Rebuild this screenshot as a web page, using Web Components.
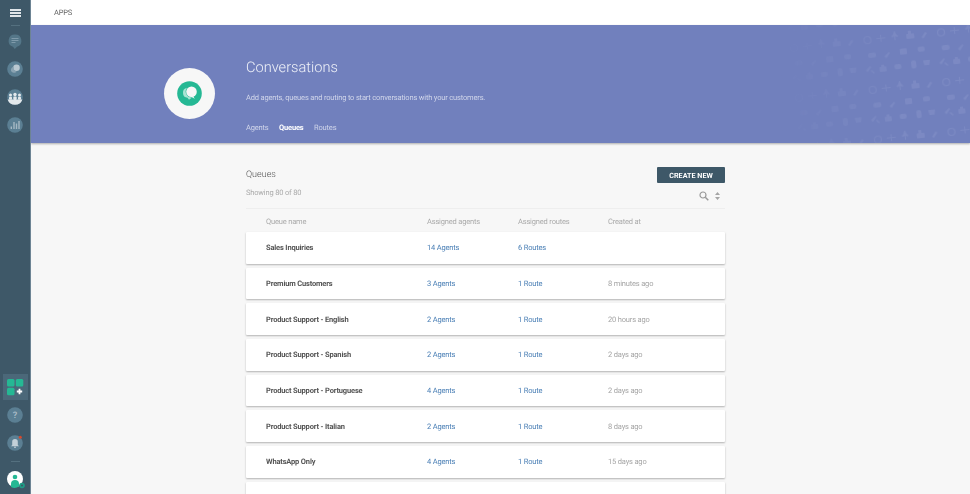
<!DOCTYPE html>
<html>
<head>
<meta charset="utf-8">
<title>Conversations</title>
<style>
html,body{margin:0;height:100%;overflow:hidden}
body{font-family:Roboto,"Liberation Sans",sans-serif;background:#f7f7f7;text-rendering:geometricPrecision}
</style>
</head>
<body>
<app-shell>
  <side-nav slot="nav"></side-nav>
  <top-bar slot="top">APPS</top-bar>
  <hero-band slot="hero" heading="Conversations" text="Add agents, queues and routing to start conversations with your customers."></hero-band>
  <queue-list>
    <queue-row name="Sales Inquiries" agents="14 Agents" routes="6 Routes" created=""></queue-row>
    <queue-row name="Premium Customers" agents="3 Agents" routes="1 Route" created="8 minutes ago"></queue-row>
    <queue-row name="Product Support - English" agents="2 Agents" routes="1 Route" created="20 hours ago"></queue-row>
    <queue-row name="Product Support - Spanish" agents="2 Agents" routes="1 Route" created="2 days ago"></queue-row>
    <queue-row name="Product Support - Portuguese" agents="4 Agents" routes="1 Route" created="2 days ago"></queue-row>
    <queue-row name="Product Support - Italian" agents="2 Agents" routes="1 Route" created="8 days ago"></queue-row>
    <queue-row name="WhatsApp Only" agents="4 Agents" routes="1 Route" created="15 days ago"></queue-row>
    <queue-row name="" agents="" routes="" created=""></queue-row>
  </queue-list>
</app-shell>
<script>
// outer frame: nav on the left, everything else stacked on the right
class AppShell extends HTMLElement {
  connectedCallback(){
    const shadow = this.attachShadow({mode:'open'});
    // the slight blur is there because the reference is a scaled down capture
    shadow.innerHTML = `
    <style>
    :host{display:flex;height:494px;width:970px;overflow:hidden;filter:blur(.3px);--small:7.500px;--tight:-.17px}
    .main{flex:1;min-width:0;display:flex;flex-direction:column;overflow:hidden}
    </style>
    <slot name="nav"></slot>
    <div class="main">
      <slot name="top"></slot>
      <slot name="hero"></slot>
      <slot></slot>
    </div>`;
  }
}
customElements.define("app-shell", AppShell);

class SideNav extends HTMLElement {
  connectedCallback(){
    const shadow = this.attachShadow({mode:'open'});
    shadow.innerHTML = `
    <style>
    :host{display:flex;flex-direction:column;align-items:center;width:30px;flex:none;background:#3e5868;border-right:1px solid #6d8494;height:494px}
    svg{display:block}
    .burger{margin-top:9px;width:11px;height:8px;display:flex;flex-direction:column;justify-content:space-between}
    .burger i{display:block;height:2px;background:#dfe5e9}
    .sep{width:9px;height:1px;background:#54707f;margin-top:8px}
    .ico{width:16px;height:16px}
    .spacer{flex:1}
    .add{width:25px;height:26px;background:#4b6879;display:grid;place-items:center;margin-bottom:7px}
    .avatar{width:16px;height:16px;margin-bottom:7px}
    </style>
    <div class="burger"><i></i><i></i><i></i></div>
    <div class="sep"></div>
    <svg class="ico" style="margin-top:7px" viewBox="0 0 16 16"><path d="M8 1.500a6.300 6.300 0 0 1 2 12.300L7.800 16 6 13.800A6.300 6.300 0 0 1 8 1.500z" fill="#547688"/><path d="M4.500 5.500h7M4.500 7.500h7M4.500 9.500h4" stroke="#7f9aaa" stroke-width="1"/></svg>
    <svg class="ico" style="margin-top:12px" viewBox="0 0 16 16"><circle cx="8" cy="8" r="7.800" fill="#5b7f93"/><circle cx="9.500" cy="6.800" r="3.300" fill="#b9c8d1"/><path d="M4 10a4 4 0 0 1 2.800-4.500A4 4 0 0 0 9.800 10.800 4 4 0 0 1 4 10z" fill="#8aa3b2"/></svg>
    <svg class="ico" style="margin-top:12px" viewBox="0 0 16 16"><circle cx="8" cy="8" r="7.800" fill="#5b7f93"/><path d="M.6 10.500h14.800A7.800 7.800 0 0 1 .6 10.500z" fill="#e3e9ec"/><g fill="#e3e9ec"><circle cx="3.500" cy="6" r="1.500"/><circle cx="8" cy="5.500" r="1.700"/><circle cx="12.500" cy="6" r="1.500"/><rect x="2" y="7.800" width="3" height="3" rx=".8"/><rect x="6.300" y="7.600" width="3.400" height="3.300" rx=".8"/><rect x="11" y="7.800" width="3" height="3" rx=".8"/></g></svg>
    <svg class="ico" style="margin-top:12px" viewBox="0 0 16 16"><circle cx="8" cy="8" r="7.800" fill="#5b7f93"/><path d="M4.300 12V9.500M7 12V5M9.500 12V6.500M12 12V4" stroke="#a5b8c3" stroke-width="1.400"/></svg>
    <div class="spacer"></div>
    <div class="add">
      <svg width="17" height="17" viewBox="0 0 17 17"><g fill="#25b894"><rect x="0" y="0" width="7.500" height="7.500" rx="1.500"/><rect x="8.800" y="0" width="7.500" height="7.500" rx="1.500"/><rect x="0" y="8.800" width="7.500" height="7.500" rx="1.500"/></g><path d="M12.500 9.800v5.400M9.800 12.500h5.400" stroke="#fff" stroke-width="1.800"/></svg>
    </div>
    <svg class="ico" style="margin-bottom:12px" viewBox="0 0 16 16"><circle cx="8" cy="8" r="7.800" fill="#5b7f93"/><text x="8" y="11.300" text-anchor="middle" font-family="Roboto" font-weight="700" font-size="9" fill="#a7bac5">?</text></svg>
    <svg class="ico" style="margin-bottom:10px;overflow:visible" viewBox="0 0 16 16"><circle cx="8" cy="8" r="7.800" fill="#5b7f93"/><path d="M8 4a2.800 2.800 0 0 1 2.800 2.800V10l1.200 1.200H4L5.200 10V6.800A2.800 2.800 0 0 1 8 4zM7 11.800h2v1H7z" fill="#c3d0d8"/><circle cx="13.300" cy="2.300" r="1.500" fill="#d9482b"/></svg>
    <div class="sep" style="margin:0 0 9px"></div>
    <div class="avatar">
      <svg width="20" height="20" viewBox="0 0 20 20" style="overflow:visible"><circle cx="8" cy="8" r="8" fill="#fff"/><circle cx="8" cy="6" r="2.300" fill="#25b894"/><path d="M4 16v-3a4 4 0 0 1 8 0v2.500A8 8 0 0 1 4 16z" fill="#25b894"/><circle cx="15" cy="14.500" r="2.800" fill="#1f9c86"/><circle cx="15" cy="14.500" r="1" fill="#3e5868"/></svg>
    </div>`;
  }
}
customElements.define("side-nav", SideNav);

class TopBar extends HTMLElement {
  connectedCallback(){
    const shadow = this.attachShadow({mode:'open'});
    shadow.innerHTML = `
    <style>
    :host{display:flex;align-items:center;flex:none;height:25px;background:#fff;padding-left:23px;font-size:var(--small);letter-spacing:var(--tight);color:#666}
    </style>
    <slot></slot>`;
  }
}
customElements.define("top-bar", TopBar);

class HeroBand extends HTMLElement {
  connectedCallback(){
    const shadow = this.attachShadow({mode:'open'});
    const heading = this.getAttribute('heading') || '';
    const text = this.getAttribute('text') || '';
    shadow.innerHTML = `
    <style>
    :host{display:block;position:relative;flex:none;height:118px;background:#7180bd;box-shadow:0 1px 2px rgba(0,0,0,.3);z-index:1;overflow:hidden}
    .wrap{position:relative;display:flex;height:100%;padding-left:133px}
    .logo{width:51px;height:51px;border-radius:50%;background:#f7f7f7;margin-top:43px;display:grid;place-items:center;flex:none}
    .info{margin-left:31px;display:flex;flex-direction:column}
    h1{margin:33px 0 0;font-size:14.600px;line-height:19px;font-weight:300;color:#f0f2f9}
    p{margin:15px 0 0;font-size:var(--small);letter-spacing:var(--tight);line-height:11px;color:#d0d5ea}
    nav{display:flex;gap:10.500px;margin-top:19px;font-size:var(--small);letter-spacing:var(--tight);line-height:11px}
    nav a{color:#d0d5ea;padding-bottom:10px;border-bottom:2px solid transparent}
    nav a.on{color:#fff;font-weight:700;border-bottom-color:#dfe2f0}
    .pattern{position:absolute;top:0;right:0;width:190px;height:118px;opacity:.55;-webkit-mask-image:linear-gradient(90deg,transparent,#000 65%);mask-image:linear-gradient(90deg,transparent,#000 65%)}
    </style>
    <svg class="pattern" viewBox="0 0 190 118">
      <defs>
        <pattern id="dots" width="74" height="50" patternUnits="userSpaceOnUse" patternTransform="translate(2 -4) rotate(-6)">
          <g fill="#8592c8">
            <path d="M4 8l5-4 1 1-4 5zM9 9l1-1 3 3-1 1z"/>
            <rect x="18" y="6" width="7" height="5" rx="1"/><rect x="20" y="4" width="3" height="2"/>
            <rect x="33" y="5" width="7" height="5" rx="2"/>
            <rect x="50" y="3" width="5" height="8" rx="2"/>
            <path d="M62 4h7l-1 5h-5z"/>
            <circle cx="9" cy="28" r="3.500" fill="none" stroke="#8592c8" stroke-width="1.200"/>
            <path d="M22 24h1v3h4v1h-4v3h-1v-3h-4v-1h4z"/>
            <path d="M36 22l1 0 1 3 2 2-1 1-2-1v4h-1v-4l-2 1-1-1 2-2z"/>
            <rect x="48" y="26" width="8" height="5" rx="1"/><rect x="50" y="23" width="3" height="3"/>
            <path d="M63 31l4-5 2 1-4 5z"/>
            <rect x="8" y="41" width="8" height="5" rx="2"/>
            <path d="M24 46l5-4 1 1-4 5z"/>
            <rect x="40" y="40" width="7" height="6" rx="1"/>
            <rect x="58" y="40" width="7" height="5" rx="2"/>
          </g>
        </pattern>
      </defs>
      <rect width="190" height="118" fill="url(#dots)"/>
    </svg>
    <div class="wrap">
      <div class="logo">
        <svg width="25" height="25" viewBox="0 0 25 25"><circle cx="12.500" cy="12.500" r="12.300" fill="#25b894"/><path d="M6 12a5 5 0 0 1 4-5.200 6 6 0 0 0 5 9.700l-3 2.300-1.500-2A5 5 0 0 1 6 12z" fill="#a9e4d4"/><circle cx="14.500" cy="10.800" r="5.300" fill="#f7f7f7"/><path d="M16 15l1.800 2.800-3.800-2z" fill="#f7f7f7"/></svg>
      </div>
      <div class="info">
        <h1>${heading}</h1>
        <p>${text}</p>
        <nav><a>Agents</a><a class="on">Queues</a><a>Routes</a></nav>
      </div>
    </div>`;
  }
}
customElements.define("hero-band", HeroBand);

class QueueList extends HTMLElement {
  connectedCallback(){
    const shadow = this.attachShadow({mode:'open'});
    shadow.innerHTML = `
    <style>
    :host{display:block;width:479px;margin:0 0 0 215px;padding-top:24px;--cols:161px 91px 90px 1fr}
    .head{display:flex;justify-content:space-between;align-items:flex-start}
    h2{margin:0;font-size:9px;line-height:14px;font-weight:300;color:#555;padding-top:1px}
    .create{width:68px;height:16px;background:#3e5868;color:#fff;font-size:7.200px;font-weight:700;display:grid;place-items:center;border-radius:1px}
    .tools{display:flex;justify-content:space-between;align-items:center;margin-top:4px;height:16px}
    .count{font-size:var(--small);letter-spacing:var(--tight);color:#aaa;position:relative;top:-3px}
    .icons{display:flex;gap:6px;align-items:center;padding-right:5px;position:relative;top:1px}
    svg{display:block}
    .cols{display:grid;grid-template-columns:var(--cols);padding-left:20px;border-top:1px solid #eee;margin-top:5px;height:24px;align-items:center;font-size:var(--small);letter-spacing:var(--tight);color:#aaa;padding-top:1px;box-sizing:border-box}
    .rows{display:flex;flex-direction:column;gap:4px}
    </style>
    <div class="head"><h2>Queues</h2><div class="create">CREATE NEW</div></div>
    <div class="tools">
      <span class="count">Showing 80 of 80</span>
      <span class="icons">
        <svg width="10" height="10" viewBox="0 0 10 10"><circle cx="4" cy="4" r="3" fill="none" stroke="#999" stroke-width="1.200"/><path d="M6.300 6.300L9.300 9.300" stroke="#999" stroke-width="1.500"/></svg>
        <svg width="5" height="8" viewBox="0 0 5 8"><path d="M2.500 0L5 3H0zM2.500 8L0 5h5z" fill="#a5a5a5"/></svg>
      </span>
    </div>
    <div class="cols"><span>Queue name</span><span>Assigned agents</span><span>Assigned routes</span><span>Created at</span></div>
    <div class="rows"><slot></slot></div>`;
  }
}
customElements.define("queue-list", QueueList);

class QueueRow extends HTMLElement {
  connectedCallback(){
    const shadow = this.attachShadow({mode:'open'});
    const name = this.getAttribute('name') || '';
    const agents = this.getAttribute('agents') || '';
    const routes = this.getAttribute('routes') || '';
    const created = this.getAttribute('created') || '';
    shadow.innerHTML = `
    <style>
    :host{display:grid;grid-template-columns:var(--cols);align-items:center;height:31.700px;flex:none;padding-left:20px;background:#fff;box-shadow:0 1px 2px rgba(0,0,0,.28);font-size:var(--small);letter-spacing:var(--tight);border-radius:1px}
    .name{font-weight:700;color:#555}
    .link{color:#4a7fb5}
    .time{color:#a5a5a5}
    </style>
    <span class="name">${name}</span><span class="link">${agents}</span><span class="link">${routes}</span><span class="time">${created}</span>`;
  }
}
customElements.define("queue-row", QueueRow);
</script>
</body>
</html>
